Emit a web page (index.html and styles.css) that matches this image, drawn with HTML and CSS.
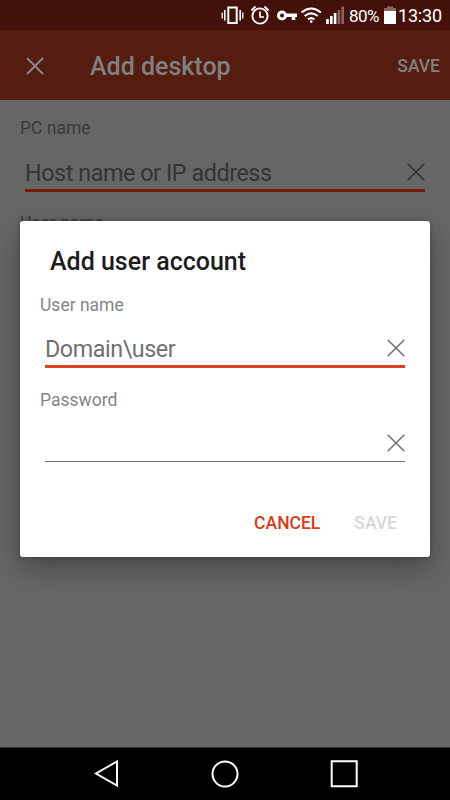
FILE: index.html
```
<!DOCTYPE html>
<html lang="en">
<head>
<meta charset="utf-8">
<title>Add desktop</title>
<link rel="stylesheet" href="styles.css">
</head>
<body>
<div class="phone">
  <header class="status">
    <svg class="status-icons" width="126" height="32" viewBox="0 0 126 32" fill="none" stroke="#fff">
      <path d="M8.300 7.500h8.400v15.500H8.300z" stroke-width="2"/>
      <path d="M4.800 10v10.500M20.200 10v10.500" stroke-width="1.600"/>
      <path d="M2.200 12.500v6M22.800 12.500v6" stroke-width="1.300"/>
      <circle cx="40" cy="16" r="7.600" stroke-width="1.900"/>
      <path d="M40 11.500V17h4" stroke-width="1.700"/>
      <path d="M31.500 10.500l4-4M48.500 10.500l-4-4" stroke-width="1.900"/>
      <circle cx="62" cy="15.500" r="3.500" stroke-width="3"/>
      <path d="M65.500 15.300H77M73.500 16v4" stroke-width="3.500"/>
      <path d="M81.500 12.500q9.700-8 19.400 0M84.700 16q6.500-5.400 13 0M88 19.300q3.200-2.500 6.400 0" stroke-width="2.100"/>
      <circle cx="91.200" cy="21.600" r="1.300" fill="#fff" stroke="none"/>
      <path d="M107.500 19v5M111.300 16v8M115.100 13v11" stroke-width="2.600"/>
      <path d="M118.900 10v14M122.700 6.500V24" stroke="#8a6662" stroke-width="2.600"/>
    </svg>
    <span class="percent">80%</span>
    <svg class="battery" width="12" height="32" viewBox="0 0 12 32">
      <path d="M3 6.500h6V8h3v4H0V8h3z" fill="#8a6662"/>
      <path d="M0 11h12v13H0z" fill="#fff"/>
    </svg>
    <span class="clock">13:30</span>
  </header>
  <div class="appbar">
    <svg class="close" width="18" height="18" viewBox="0 0 18 18"><path d="M1 1l16 16M17 1L1 17"/></svg>
    <h1>Add desktop</h1>
    <span class="bar-save">SAVE</span>
  </div>
  <main class="page">
    <div class="label">PC name</div>
    <div class="field active">
      <span>Host name or IP address</span>
      <svg class="clear" width="18" height="18" viewBox="0 0 18 18"><path d="M.7.700l16.600 16.600M17.300.700L.700 17.300"/></svg>
    </div>
    <div class="label">User name</div>
  </main>
  <nav class="nav">
    <svg width="450" height="53" viewBox="0 0 450 53" fill="none" stroke="#fff" stroke-width="2">
      <path d="M117 14.500v24L96 26.500z"/>
      <circle cx="225" cy="27" r="12.500"/>
      <path d="M331.700 14.300h25v25h-25z"/>
    </svg>
  </nav>
  <section class="dialog">
    <h2>Add user account</h2>
    <div class="label">User name</div>
    <div class="field active">
      <span>Domain\user</span>
      <svg class="clear" width="18" height="18" viewBox="0 0 18 18"><path d="M.7.700l16.600 16.600M17.300.700L.700 17.300"/></svg>
    </div>
    <div class="label">Password</div>
    <div class="field password">
      <span></span>
      <svg class="clear" width="18" height="18" viewBox="0 0 18 18"><path d="M.7.700l16.600 16.600M17.300.700L.700 17.300"/></svg>
    </div>
    <div class="actions"><span class="cancel">CANCEL</span><span class="save">SAVE</span></div>
  </section>
</div>
</body>
</html>
```
FILE: styles.css
```
* { box-sizing: border-box; }
body { margin: 0; font-family: Roboto, "Liberation Sans", sans-serif; }
h1, h2 { margin: 0; font-weight: 500; font-size: 25px; white-space: nowrap; }
.phone { position: relative; width: 450px; height: 800px; display: flex; flex-direction: column; overflow: hidden; background: #666; }
.status { height: 30px; flex: none; display: flex; background: #44110a; color: #fff; line-height: 32px; }
.status svg { flex: none; }
.status-icons { margin-left: 220px; }
.percent { width: 38px; padding-left: 3px; font-size: 17px; letter-spacing: -.6px; white-space: nowrap; }
.clock { padding-left: 2px; font-size: 18px; letter-spacing: -.2px; }
.appbar { height: 70px; flex: none; display: flex; align-items: center; padding: 1px 10px 0 26px; background: #551c10; color: #808080; }
.close { stroke: #868686; stroke-width: 2; fill: none; }
.appbar h1 { margin-left: 46px; padding-top: 2px; }
.bar-save { margin-left: auto; font-size: 17.500px; font-weight: 500; }
.page { flex: 1; padding: 17px 20px 0; }
.label { height: 22px; line-height: 22px; font-size: 17.500px; white-space: nowrap; }
.page .label { color: #3b3b3b; }
.field { display: flex; justify-content: space-between; margin: 0 5px; height: 53px; border-bottom: 1px solid #707070; font-size: 23.300px; letter-spacing: -.42px; line-height: 28px; padding-top: 20px; }
.field.active { border-bottom: 3px solid #dc4320; }
.clear { fill: none; stroke: #707070; stroke-width: 1.500; margin-top: 4px; }
.page .field { color: #343434; border-color: #751b06; margin-bottom: 20px; }
.page .clear { stroke: #303030; }
.nav { height: 53px; flex: none; background: #000; border-top: 1px solid #333; }
.nav svg { display: block; margin-top: -1px; }
.dialog { position: absolute; left: 20px; top: 221px; width: 410px; height: 336px; padding: 25px 20px 0; background: #fff; border-radius: 3px; box-shadow: 0 12px 28px rgba(0,0,0,.3), 0 0 4px rgba(0,0,0,.25); }
.dialog h2 { padding-left: 10px; height: 47px; line-height: 32px; color: #1d1d1d; }
.dialog .label { color: #858585; line-height: 24px; }
.dialog .field { color: #707070; margin-bottom: 20px; }
.dialog .password { height: 52px; }
.actions { display: flex; justify-content: flex-end; gap: 34px; padding: 29px 13px 0 0; font-size: 17.500px; font-weight: 500; line-height: 24px; }
.cancel { color: #d83b19; }
.save { color: #d7d7d7; }
```
